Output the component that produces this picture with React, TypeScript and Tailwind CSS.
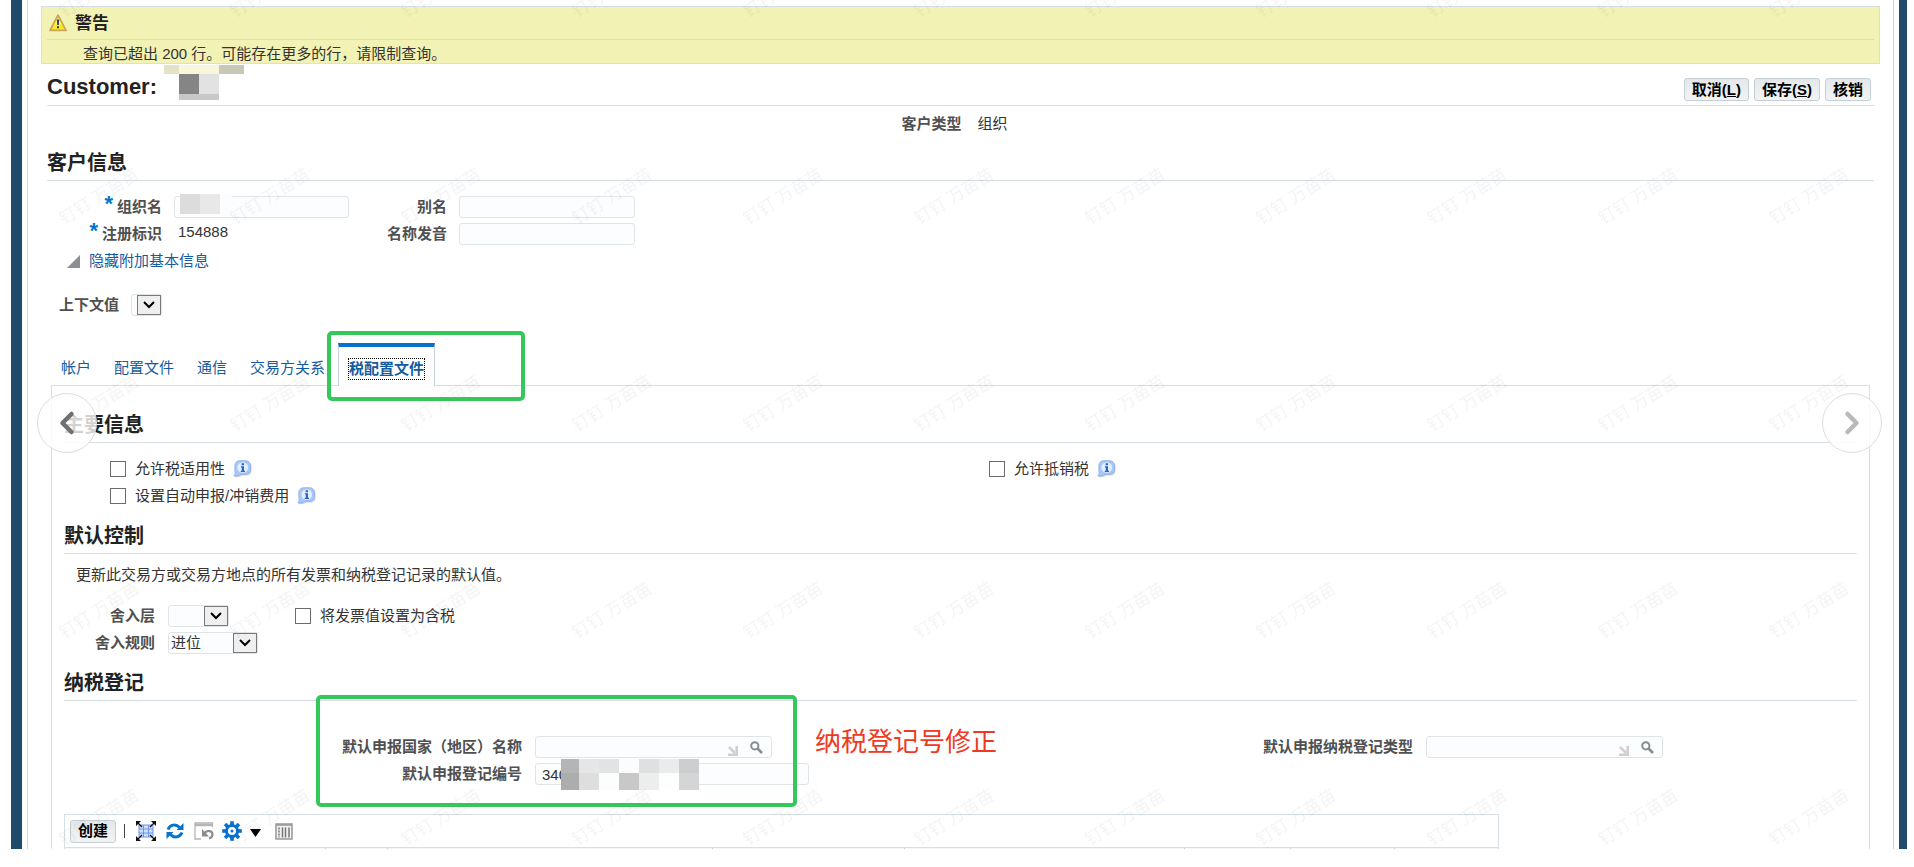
import { useState, type ReactNode } from "react";
import { ChevronLeft, ChevronRight } from "lucide-react";

const tabs = ["帐户", "配置文件", "通信", "交易方关系", "税配置文件"];

const inputClass = "h-[22px] rounded-[3px] border border-[#dfe4e7] bg-[#fcfdfe] text-[15px] text-[#333] outline-none";
const labelClass = "text-[15px] leading-5 font-bold text-[#505050]";

function SectionTitle({ children }: { children: ReactNode }) {
  return <h2 className="h-9 border-b border-[#d6dfe6] text-[20px] leading-9 font-bold text-[#222]">{children}</h2>;
}

function ActionButton({ children }: { children: ReactNode }) {
  return (
    <button className="h-[23px] rounded-[3px] border border-[#c4ced7] bg-linear-to-b from-[#e4e8ea] to-[#f2f3f4] px-[7px] text-[15px] leading-5 font-bold text-black">
      {children}
    </button>
  );
}

function WarningIcon() {
  return (
    <svg viewBox="0 0 18 18" className="h-[18px] w-[18px]">
      <path d="M9 1.2 L17 16.4 H1 Z" fill="#f7ea1e" stroke="#c9a45c" strokeWidth="1.8" strokeLinejoin="round" />
      <path d="M9 3.5 L12.5 10.5 H5.5 Z" fill="#fbf6a8" opacity="0.7" />
      <path d="M7.900 5.500h2.200l-.3 5.500H8.200z M8 12.300h2v2H8z" fill="#2e3a55" />
    </svg>
  );
}

function InfoIcon() {
  return (
    <svg viewBox="0 0 19 18" className="h-[18px] w-[19px]">
      <path d="M7 2h7a4.500 4.500 0 0 1 4.500 4.500v4A4.500 4.500 0 0 1 14 15.500H9c-2 1.500-5 2-7 1.500z" fill="#a9b2c2" opacity="0.6" />
      <path
        d="M6.500.8h6.300a4.600 4.600 0 0 1 4.600 4.600v4.200a4.600 4.600 0 0 1-4.600 4.600H8.300C6 15.800 3 16.400.8 15.800c1-.9 1.500-2 1.400-3.100-.3-.8-.3-1.800-.3-3.100V5.400A4.600 4.600 0 0 1 6.500.8z"
        fill="#a9c8f8"
        stroke="#8db2ee"
        strokeWidth="1"
      />
      <circle cx="9.700" cy="7.500" r="5.300" fill="#e4effe" />
      <path d="M8.600 3.200h2.400v2H8.600z M7.900 6.300h3.100v4.500h1V12H7.800v-1.200h1V7.500h-.9z" fill="#2f62c4" />
    </svg>
  );
}

function Check({ id, label, info = false }: { id: string; label: string; info?: boolean }) {
  return (
    <div className="flex h-[27px] items-center">
      <input id={id} type="checkbox" className="h-4 w-4 appearance-none border border-[#6b6b6b] bg-white checked:bg-[#0572ce]" />
      <label htmlFor={id} className="ml-[9px] text-[15px] leading-5 text-[#333]">
        {label}
      </label>
      {info && (
        <span className="ml-2">
          <InfoIcon />
        </span>
      )}
    </div>
  );
}

function Select({ id, width, options }: { id: string; width: string; options: string[] }) {
  return (
    <div className={`relative ${width}`}>
      <select id={id} className={`${inputClass} block w-full appearance-none pl-[2px] leading-5`}>
        {options.map((option) => (
          <option key={option}>{option}</option>
        ))}
      </select>
      <span className="pointer-events-none absolute top-px right-px flex h-5 w-6 items-center justify-center border border-[#7a7a7a] bg-[#efefef]">
        <svg viewBox="0 0 12 8" className="h-2 w-3">
          <path d="M1 1l5 5 5-5" fill="none" stroke="#000" strokeWidth="2" />
        </svg>
      </span>
    </div>
  );
}

function LookupInput({ id }: { id: string }) {
  return (
    <div className={`${inputClass} flex w-[237px] items-center pr-2`}>
      <input id={id} className="h-full min-w-0 flex-1 bg-transparent pl-1.5 outline-none" />
      <svg viewBox="0 0 10 10" className="mt-2 mr-3 h-2.5 w-2.5">
        <path d="M1 1l6 6" stroke="#cfcfcf" strokeWidth="2.500" />
        <path d="M8.700 0v8.700H0" fill="none" stroke="#cfcfcf" strokeWidth="2.600" />
      </svg>
      <button aria-label="搜索">
        <svg viewBox="0 0 13 13" className="h-[13px] w-[13px]">
          <circle cx="4.800" cy="4.800" r="3.600" fill="none" stroke="#888d90" strokeWidth="2" />
          <path d="M7.500 7.500l4.500 4.500" stroke="#888d90" strokeWidth="2.600" />
        </svg>
      </button>
    </div>
  );
}

function Required() {
  return <span className="h-5 self-start pr-1 text-[22px] leading-4 font-bold text-[#0572ce]">*</span>;
}

function Mosaic({ rows }: { rows: string[][] }) {
  return (
    <div>
      {rows.map((row, i) => (
        <div key={i} className="flex">
          {row.map((cell, j) => (
            <div key={j} className={cell} />
          ))}
        </div>
      ))}
    </div>
  );
}

function Watermark() {
  return (
    <svg aria-hidden="true" className="pointer-events-none absolute inset-0 h-full w-full">
      <defs>
        <pattern id="watermark" width="171" height="207" patternUnits="userSpaceOnUse" x="48" y="-40">
          <text x="16" y="58" fontSize="17" fill="#000" fillOpacity="0.045" transform="rotate(-32 16 58)">
            钉钉 万苗苗
          </text>
        </pattern>
      </defs>
      <rect x="50" width="100%" height="100%" fill="url(#watermark)" />
    </svg>
  );
}

function Toolbar() {
  return (
    <div className="flex h-8 items-center pl-[5px]">
      <ActionButton>创建</ActionButton>
      <span className="ml-2 h-3.5 w-px bg-[#444]" />
      <button aria-label="分离" className="ml-[11px]">
        <svg viewBox="0 0 20 20" className="h-5 w-5">
          <rect x="3" y="4" width="14" height="12" fill="#cfdffb" stroke="#6f96e6" />
          <path d="M3 8h14M3 12h14M7.500 4v12M12.500 4v12" stroke="#6f96e6" />
          <path d="M1 1l5 5M19 1l-5 5M1 19l5-5M19 19l-5-5" stroke="#111" strokeWidth="1.300" />
          <path d="M0 0h5L0 5zM20 0v5l-5-5zM0 20v-5l5 5zM20 20h-5l5-5z" fill="#111" />
        </svg>
      </button>
      <button aria-label="刷新" className="ml-2.5">
        <svg viewBox="0 0 18 18" className="h-[18px] w-[18px]">
          <path d="M2 7.500C4 2.500 10 1.500 13.500 5.500M16 10.500c-2 5-8 6-11.500 2" fill="none" stroke="#0572ce" strokeWidth="3" />
          <path d="M17.500 1v7h-7zM.5 17v-7h7z" fill="#0572ce" />
        </svg>
      </button>
      <button aria-label="返回" className="ml-2.5">
        <svg viewBox="0 0 20 18" className="h-[18px] w-5">
          <path d="M7 17H1V1h17.500v4" fill="none" stroke="#b5b5b5" strokeWidth="1.300" />
          <path d="M1 3h17.500" stroke="#b5b5b5" strokeWidth="2.500" />
          <path d="M10.500 11c3-3.500 8-2 8 1.500 0 2-1.500 3.500-3.500 4" fill="none" stroke="#8d8d8d" strokeWidth="2.200" />
          <path d="M8 7v7.500h7z" fill="#8d8d8d" />
        </svg>
      </button>
      <button aria-label="设置" className="ml-2 flex items-center gap-2">
        <svg viewBox="-10 -10 20 20" className="h-5 w-5">
          <circle r="5.500" fill="none" stroke="#0572ce" strokeWidth="3" />
          <circle r="1.500" fill="#0572ce" />
          {[0, 45, 90, 135, 180, 225, 270, 315].map((angle) => (
            <rect key={angle} x="-1.800" y="-9.800" width="3.600" height="4" fill="#0572ce" transform={`rotate(${angle})`} />
          ))}
        </svg>
        <svg viewBox="0 0 11 8" className="mt-1 h-2 w-[11px]">
          <path d="M0 0h11L5.500 8z" />
        </svg>
      </button>
      <button aria-label="列" className="ml-3.5">
        <svg viewBox="0 0 18 17" className="h-[17px] w-[18px]">
          <rect x="1" y="1" width="16" height="15" fill="#f0f0f0" stroke="#999" strokeWidth="1.500" />
          <path d="M1 2h16" stroke="#999" strokeWidth="1.500" />
          <path d="M7.500 4.500v10M10.500 4.500v10M14 4.500v10" stroke="#777" strokeWidth="1.500" />
          <path d="M4 4.500v10" stroke="#777" strokeWidth="1.500" strokeDasharray="2 1" />
        </svg>
      </button>
    </div>
  );
}

export default function App() {
  const [activeTab, setActiveTab] = useState("税配置文件");

  return (
    <div className="bg-white pr-[7px] pb-[18px] pl-[11px] font-['Liberation_Sans','Noto_Sans_CJK_SC',sans-serif] text-[15px] text-[#333]">
      <div className="border-r-8 border-l-11 border-[#1f4b6d] px-[5px]">
        <main className="border-x border-[#ccd6e2] pt-1.5 pr-[13px] pl-[13px]">
          <section className="h-[58px] border border-[#d5dfe4] bg-[#f3f2b5] px-[5px]">
            <div className="flex h-[33px] items-center gap-2 border-b border-[#d5dce0] pl-0.5">
              <WarningIcon />
              <h2 className="pt-0.5 text-[17px] leading-6 font-bold text-[#222]">警告</h2>
            </div>
            <p className="pt-1 pl-9 leading-5">查询已超出 200 行。可能存在更多的行，请限制查询。</p>
          </section>

          <div className="pr-1.5 pl-1.5">
            <header className="flex h-[42px] justify-between border-b border-[#d6dfe6] pr-[3px]">
              <div className="flex">
                <h1 className="pt-[9px] text-[22px] leading-7 font-bold text-[#222]">Customer:</h1>
                <div className="ml-[7px] pt-px">
                  <Mosaic
                    rows={[
                      ["h-[9px] w-[15px] bg-[#e4e3c8]", "h-[9px] w-10 bg-[#f8f7dc]", "h-[9px] w-[25px] bg-[#c8c8b8]"],
                      ["h-5 w-[15px]", "h-5 w-5 bg-[#858585]", "h-5 w-5 bg-[#e2e2e2]"],
                      ["h-1.5 w-[15px]", "h-1.5 w-10 bg-[#c8c8c8]"],
                    ]}
                  />
                </div>
              </div>
              <div className="flex gap-[5px] pt-3.5">
                <ActionButton>
                  取消(<u>L</u>)
                </ActionButton>
                <ActionButton>
                  保存(<u>S</u>)
                </ActionButton>
                <ActionButton>核销</ActionButton>
              </div>
            </header>

            <dl className="flex h-[39px] justify-center gap-4 pt-2 pr-3 leading-5">
              <dt className={labelClass}>客户类型</dt>
              <dd>组织</dd>
            </dl>

            <SectionTitle>客户信息</SectionTitle>
            <div className="mt-[15px] grid grid-cols-[115px_175px_86px_176px] gap-x-3 gap-y-[5px]">
              <div className="flex items-center justify-end">
                <Required />
                <label htmlFor="org" className={labelClass}>组织名</label>
              </div>
              <div className={`${inputClass} relative`}>
                <input id="org" className="h-full w-full bg-transparent outline-none" />
                <div className="absolute -top-[3px] left-[5px]">
                  <Mosaic rows={[["h-5 w-5 bg-[#dcdcdc]", "h-5 w-5 bg-[#e8e8e8]", "h-5 w-3 bg-[#fcfdfe]"]]} />
                </div>
              </div>
              <label htmlFor="alias" className={`${labelClass} self-center text-right`}>别名</label>
              <input id="alias" className={inputClass} />
              <div className="flex items-center justify-end">
                <Required />
                <span className={labelClass}>注册标识</span>
              </div>
              <span className="pl-1 leading-[18px]">154888</span>
              <label htmlFor="phonetic" className={`${labelClass} self-center text-right`}>名称发音</label>
              <input id="phonetic" className={inputClass} />
            </div>

            <a href="#basic" className="mt-1.5 ml-5 flex items-center gap-[9px] leading-5 text-[#145c9e]">
              <svg viewBox="0 0 13 13" className="h-[13px] w-[13px]">
                <path d="M13 0v13H0z" fill="#8b8f93" />
              </svg>
              隐藏附加基本信息
            </a>

            <div className="mt-[23px] flex items-center gap-3 pl-3">
              <label htmlFor="context" className={labelClass}>上下文值</label>
              <Select id="context" width="w-[31px]" options={[""]} />
            </div>

            <nav className="mt-[27px] flex h-[42px] pl-3.5 text-[#145c9e]">
              {tabs.map((tab) =>
                tab === activeTab ? (
                  <button
                    key={tab}
                    className="relative z-10 -mb-px -ml-[10px] border-x border-t-4 border-x-[#c5d0da] border-t-[#0572ce] bg-white px-[10px] pt-1 font-bold leading-5"
                  >
                    <span className="block outline-1 outline-dotted outline-black">{tab}</span>
                  </button>
                ) : (
                  <button key={tab} onClick={() => setActiveTab(tab)} className="mr-[23px] pt-2 leading-5">
                    {tab}
                  </button>
                ),
              )}
            </nav>

            <div className="mr-1 ml-1 border-x border-t border-[#d6dfe6] px-3 pt-[21px]">
              <SectionTitle>主要信息</SectionTitle>
              <div className="mt-3 grid grid-cols-[879px_auto] pl-[46px]">
                <Check id="applicable" label="允许税适用性" info />
                <Check id="offset" label="允许抵销税" info />
                <Check id="self" label="设置自动申报/冲销费用" info />
              </div>

              <div className="mt-[9px]">
                <SectionTitle>默认控制</SectionTitle>
              </div>
              <p className="pt-[11px] pl-3 leading-5">更新此交易方或交易方地点的所有发票和纳税登记记录的默认值。</p>

              <div className="mt-5 grid grid-cols-[91px_90px_auto] gap-x-[13px] gap-y-[5px]">
                <label htmlFor="level" className={`${labelClass} self-center text-right`}>舍入层</label>
                <Select id="level" width="w-[61px]" options={[""]} />
                <div className="flex h-[22px] items-center pl-6">
                  <Check id="inclusive" label="将发票值设置为含税" />
                </div>
                <label htmlFor="rule" className={`${labelClass} self-center text-right`}>舍入规则</label>
                <Select id="rule" width="w-[90px]" options={["进位"]} />
              </div>

              <div className="mt-[11px]">
                <SectionTitle>纳税登记</SectionTitle>
              </div>
              <div className="mt-[35px] flex">
                <div className="grid grid-cols-[458px_274px] gap-x-[13px] gap-y-[5px]">
                  <label htmlFor="country" className={`${labelClass} self-center text-right`}>默认申报国家（地区）名称</label>
                  <LookupInput id="country" />
                  <label htmlFor="regno" className={`${labelClass} self-center text-right`}>默认申报登记编号</label>
                  <div className={`${inputClass} relative`}>
                    <input id="regno" defaultValue="340" className="h-full w-full bg-transparent pl-1.5 outline-none" />
                    <div className="absolute -top-[5px] left-[25px]">
                      <Mosaic
                        rows={[
                          ["h-3.5 w-[18px] bg-[#b4b5b7]", "h-3.5 w-5 bg-[#e5e6e8]", "h-3.5 w-5 bg-[#e2e3e5]", "h-3.5 w-5 bg-[#fbfcfd]", "h-3.5 w-5 bg-[#dfe0e2]", "h-3.5 w-5 bg-[#eaebed]", "h-3.5 w-5 bg-[#cdced0]"],
                          ["h-[17px] w-[18px] bg-[#adadad]", "h-[17px] w-5 bg-[#dedede]", "h-[17px] w-5 bg-[#fcfefe]", "h-[17px] w-5 bg-[#c8c8c8]", "h-[17px] w-5 bg-[#eceded]", "h-[17px] w-5 bg-[#fdfefe]", "h-[17px] w-5 bg-[#d5d5d5]"],
                        ]}
                      />
                    </div>
                  </div>
                </div>
                <p className="-mt-2.5 ml-1.5 text-[26px] leading-8 text-[#ee3a24]">纳税登记号修正</p>
                <div className="ml-[266px] flex gap-[13px]">
                  <label htmlFor="regtype" className={`${labelClass} pt-px`}>默认申报纳税登记类型</label>
                  <LookupInput id="regtype" />
                </div>
              </div>

              <div className="mt-[29px] w-[1435px] border-x border-t border-[#d6dfe6]">
                <Toolbar />
                <div className="flex h-0.5 border-t border-[#d6dfe6] bg-[#f4f7f9]">
                  <span className="w-[261px] border-r border-[#c5d0da]" />
                  <span className="w-[62px] border-r border-[#c5d0da]" />
                  <span className="w-[325px] border-r border-[#c5d0da]" />
                  <span className="w-48 border-r border-[#c5d0da]" />
                  <span className="w-[280px] border-r border-[#c5d0da]" />
                  <span className="w-[106px] border-r border-[#c5d0da]" />
                  <span className="w-26 border-r border-[#c5d0da]" />
                </div>
              </div>
            </div>
          </div>
        </main>
      </div>

      {/* annotations and carousel arrows float over the form */}
      <div className="pointer-events-none absolute top-[331px] left-[327px] z-20 h-[70px] w-[198px] rounded-[5px] border-4 border-[#34c759]" />
      <div className="pointer-events-none absolute top-[695px] left-[316px] z-20 h-28 w-[481px] rounded-[5px] border-4 border-[#34c759]" />
      <div className="pointer-events-none absolute top-0 left-0 h-[849px] w-full overflow-hidden">
        <Watermark />
      </div>
      <button
        aria-label="上一张"
        className="absolute top-[393px] left-[37px] flex h-[60px] w-[60px] items-center justify-center rounded-full border border-[#ddd] bg-white/80 text-[#6f7072]"
      >
        <ChevronLeft size={36} strokeWidth={3} />
      </button>
      <button
        aria-label="下一张"
        className="absolute top-[393px] right-8 flex h-[60px] w-[60px] items-center justify-center rounded-full border border-[#ddd] bg-white/80 text-[#b9b9b9]"
      >
        <ChevronRight size={36} strokeWidth={3} />
      </button>
    </div>
  );
}
